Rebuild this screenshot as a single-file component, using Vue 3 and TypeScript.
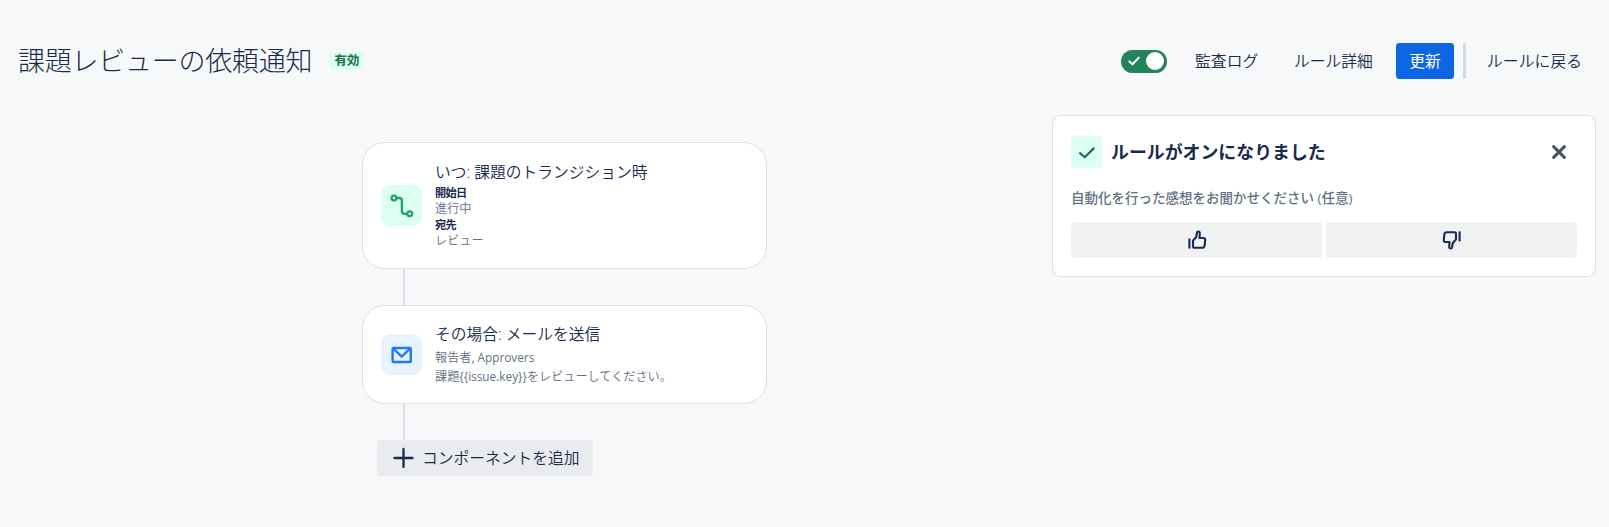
<script setup lang="ts">
import { ref } from 'vue'

const title = '課題レビューの依頼通知'
const enabled = ref(true)
const panelOpen = ref(true)
const issueKey = '{{issue.key}}'
</script>

<template>
  <div class="page">
    <header class="header">
      <h1 class="title">{{ title }}</h1>
      <span class="badge">有効</span>
      <div class="actions">
        <button class="toggle" :class="{ off: !enabled }" aria-label="有効" @click="enabled = !enabled">
          <svg width="14" height="12" viewBox="0 0 14 12"><path d="M2.4 6.4 5.5 9.2 11.9 2.6" fill="none" stroke="#fff" stroke-width="2" stroke-linecap="round" stroke-linejoin="round" /></svg>
          <span class="knob"></span>
        </button>
        <a class="link audit">監査ログ</a>
        <a class="link details">ルール詳細</a>
        <button class="primary">更新</button>
        <span class="divider"></span>
        <a class="link back">ルールに戻る</a>
      </div>
    </header>

    <main class="body">
      <section class="flow">
        <article class="card trigger">
          <span class="icon green">
            <svg width="24" height="24" viewBox="0 0 24 24" fill="none" stroke="#22a06b" stroke-width="2.3" stroke-linecap="round">
              <circle cx="4" cy="4" r="2.4" />
              <circle cx="19.7" cy="19.8" r="2.4" />
              <path d="M7 4H9.4Q11.9 4 11.9 6.5V17.3Q11.9 19.8 14.4 19.8H17" />
            </svg>
          </span>
          <div class="text">
            <div class="name">いつ: 課題のトランジション時</div>
            <div class="key">開始日</div>
            <div class="value">進行中</div>
            <div class="key">宛先</div>
            <div class="value">レビュー</div>
          </div>
        </article>
        <div class="line"></div>
        <article class="card action">
          <span class="icon blue">
            <svg width="22" height="18" viewBox="0 0 22 18" fill="none" stroke="#1d7afc" stroke-width="2.4" stroke-linejoin="round">
              <rect x="1.6" y="2" width="18.2" height="14" rx="0.8" />
              <path d="M2.2 2.5 10.7 10.6 19.2 2.5" />
            </svg>
          </span>
          <div class="text">
            <div class="name">その場合: メールを送信</div>
            <div class="value">報告者<span class="latin">, Approvers</span></div>
            <div class="value">課題<span class="latin">{{ issueKey }}</span>をレビューしてください。</div>
          </div>
        </article>
        <div class="line"></div>
        <button class="add">
          <svg width="22" height="22" viewBox="0 0 22 22"><path d="M10.5 2V20M1.5 11H19.5" stroke="#172b4d" stroke-width="2.3" stroke-linecap="round" /></svg>
          <span>コンポーネントを追加</span>
        </button>
      </section>

      <aside v-if="panelOpen" class="panel">
        <div class="panel-head">
          <span class="ok">
            <svg width="18" height="14" viewBox="0 0 18 14"><path d="M2 8.2 6.7 12.2 15.7 3.4" fill="none" stroke="#216e4e" stroke-width="2.2" stroke-linecap="round" stroke-linejoin="round" /></svg>
          </span>
          <h2 class="panel-title">ルールがオンになりました</h2>
          <button class="close" aria-label="閉じる" @click="panelOpen = false">
            <svg width="16" height="16" viewBox="0 0 16 16"><path d="M2.6 2.6 13.4 13.4M13.4 2.6 2.6 13.4" stroke="#44546f" stroke-width="3" stroke-linecap="round" /></svg>
          </button>
        </div>
        <p class="question">自動化を行った感想をお聞かせください (任意)</p>
        <div class="votes">
          <button class="vote" aria-label="良い">
            <svg width="20" height="20" viewBox="0 0 20 20" fill="none" stroke="#172b4d" stroke-width="2.1" stroke-linejoin="round" stroke-linecap="butt">
              <path d="M2.4 8.6V18.6" />
              <path d="M6 16.3V10.6L9.2 7 9.9 2.8Q10.2 1.5 11.2 1.5Q12.9 1.5 12.8 3.8L12.4 8H16Q18.5 8 18.2 10.2L17.6 15.6Q17.3 17.8 15.4 17.8H7.4Q6 17.8 6 16.3Z" />
            </svg>
          </button>
          <button class="vote" aria-label="悪い">
            <svg class="flip" width="20" height="20" viewBox="0 0 20 20" fill="none" stroke="#172b4d" stroke-width="2.1" stroke-linejoin="round" stroke-linecap="butt">
              <path d="M2.4 8.6V18.6" />
              <path d="M6 16.3V10.6L9.2 7 9.9 2.8Q10.2 1.5 11.2 1.5Q12.9 1.5 12.8 3.8L12.4 8H16Q18.5 8 18.2 10.2L17.6 15.6Q17.3 17.8 15.4 17.8H7.4Q6 17.8 6 16.3Z" />
            </svg>
          </button>
        </div>
      </aside>
    </main>
  </div>
</template>

<style>
body {
  background: #f7f8f9;
}
</style>

<style scoped>
.page {
  box-sizing: border-box;
  width: 1609px;
  height: 527px;
  overflow: hidden;
  padding: 43px 13px 0 18px;
  background: #f7f8fa;
  color: #172b4d;
  font-family: "Open Sans", "Noto Sans CJK JP", sans-serif;
  font-weight: 350;
  white-space: nowrap;
}
.page * {
  box-sizing: border-box;
}
button {
  border: 0;
  padding: 0;
  font: inherit;
  color: inherit;
  display: flex;
  align-items: center;
}
svg {
  display: block;
  flex: none;
}
.header {
  display: flex;
  height: 36px;
  align-items: center;
}
.title {
  margin: 0;
  width: 312px;
  font-size: 27px;
  font-weight: 300;
  line-height: 36px;
  letter-spacing: -0.25px;
}
.badge {
  width: 34px;
  height: 18px;
  border-radius: 3px;
  background: #dcfff1;
  color: #216e4e;
  font-size: 12.4px;
  font-weight: 700;
  line-height: 18px;
  text-align: center;
}
.actions {
  display: flex;
  align-items: center;
  margin-left: auto;
  font-size: 15.75px;
  line-height: 36px;
}
.toggle {
  width: 46px;
  height: 23px;
  border-radius: 12px;
  background: #22845a;
  padding: 0 3px 0 6px;
  justify-content: space-between;
}
.toggle.off {
  background: #626f86;
  flex-direction: row-reverse;
}
.knob {
  width: 18px;
  height: 18px;
  border-radius: 50%;
  background: #fff;
}
.audit {
  margin-left: 28px;
  width: 99px;
  letter-spacing: 0.1px;
}
.details {
  width: 102px;
}
.primary {
  width: 58px;
  height: 36px;
  border-radius: 3.4px;
  background: #0c66e4;
  color: #fff;
  font-weight: 400;
  justify-content: center;
}
.divider {
  width: 3px;
  height: 36px;
  margin-left: 9px;
  border-radius: 2px;
  background: #d5d9e0;
}
.back {
  margin-left: 21px;
  width: 109px;
  letter-spacing: 0.1px;
}
.body {
  display: flex;
  justify-content: space-between;
  align-items: flex-start;
  padding: 36px 0 0 344px;
}
.flow {
  width: 405px;
  padding-top: 27px;
}
.card {
  display: flex;
  align-items: center;
  gap: 13px;
  border: 1px solid #dcdfe4;
  border-radius: 23px;
  background: #fff;
  padding-left: 18px;
}
.trigger {
  height: 127px;
}
.action {
  height: 99px;
}
.icon {
  display: flex;
  align-items: center;
  justify-content: center;
  width: 41px;
  height: 41px;
  border-radius: 9px;
}
.green {
  background: #dcfff1;
}
.blue {
  background: #e9f2ff;
}
.name {
  font-size: 15.75px;
  line-height: 24px;
}
.key {
  font-size: 11.2px;
  font-weight: 700;
  line-height: 16px;
  letter-spacing: -0.7px;
}
.value {
  color: #626f86;
  font-size: 12.15px;
  line-height: 16px;
}
.latin {
  font-size: 11.8px;
  font-weight: 400;
}
.trigger .text {
  padding-bottom: 2px;
}
.trigger .name {
  line-height: 23px;
  padding-bottom: 1px;
}
.action .text {
  padding-bottom: 2px;
}
.action .name {
  line-height: 25px;
  padding-bottom: 1px;
}
.action .value {
  line-height: 18px;
}
.line {
  width: 2px;
  height: 36px;
  margin-left: 41px;
  background: #dcdfe6;
}
.add {
  width: 216px;
  height: 36px;
  margin-left: 15px;
  padding-left: 16px;
  gap: 7px;
  border-radius: 3.4px;
  background: #e9ebee;
  font-size: 15.75px;
}
.add span {
  padding-bottom: 1px;
}
.panel {
  width: 544px;
  height: 162px;
  padding: 20px 18px 0;
  border: 1px solid #dcdfe4;
  border-radius: 9px;
  background: #fff;
}
.panel-head {
  display: flex;
  align-items: center;
  height: 32px;
}
.ok {
  display: flex;
  align-items: center;
  justify-content: center;
  width: 31px;
  height: 32px;
  border-radius: 3px;
  background: #dcfff1;
}
.panel-title {
  margin: 0 0 0 9px;
  font-size: 17.9px;
  font-weight: 700;
  line-height: 32px;
}
.close {
  margin: 0 10px 0 auto;
  background: none;
}
.question {
  margin: 20px 0 14px;
  color: #626f86;
  font-size: 13.5px;
  font-weight: 500;
  line-height: 20px;
}
.votes {
  display: flex;
  gap: 4px;
}
.vote {
  flex: 1;
  height: 36px;
  justify-content: center;
  border-radius: 3.4px;
  background: #f0f1f3;
}
.vote svg {
  margin-bottom: 1px;
}
.flip {
  transform: rotate(180deg);
}
</style>
